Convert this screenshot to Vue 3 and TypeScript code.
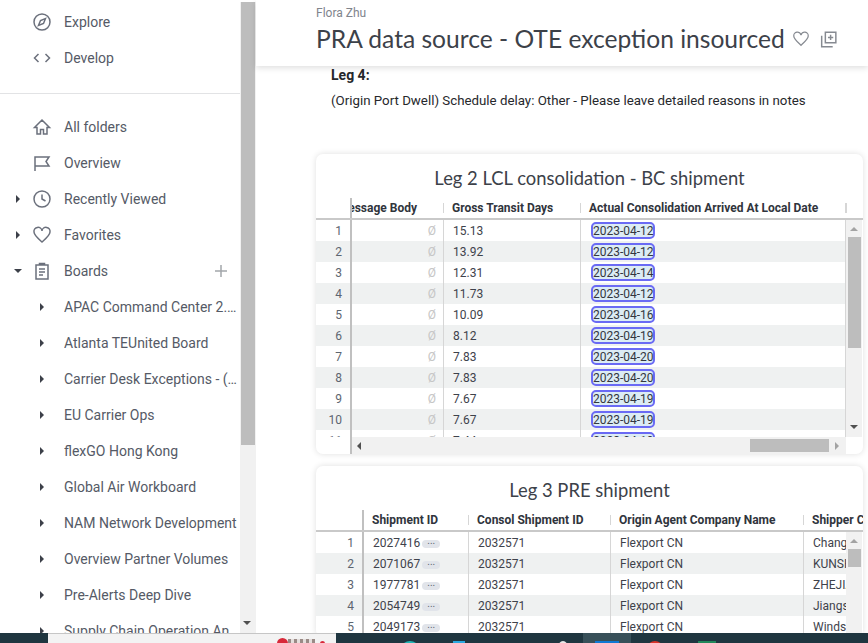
<template>
  <div class="screen">
    <div class="window">
      <!-- Sidebar -->
      <aside class="sidebar">
        <nav class="nav">
          <a v-for="item in topLinks" :key="item.label" class="nav-row">
            <span class="slot"></span>
            <svg class="icon" viewBox="0 0 20 20"><path :d="icons[item.icon]" /></svg>
            <span class="nav-label">{{ item.label }}</span>
          </a>
          <hr class="divider" />
          <a v-for="item in mainLinks" :key="item.label" class="nav-row">
            <span class="slot">
              <i v-if="item.caret === 'right'" class="caret-right top"></i>
              <i v-if="item.caret === 'down'" class="caret-down"></i>
            </span>
            <svg class="icon" viewBox="0 0 20 20"><path :d="icons[item.icon]" /></svg>
            <span class="nav-label">{{ item.label }}</span>
            <svg v-if="item.label === 'Boards'" class="plus" viewBox="0 0 14 14"><path d="M7 1v12M1 7h12" /></svg>
          </a>
          <a v-for="board in boards" :key="board" class="nav-row">
            <span class="slot"></span>
            <span class="icon-slot"><i class="caret-right"></i></span>
            <span class="nav-label">{{ board }}</span>
          </a>
        </nav>
        <div class="side-scroll">
          <div class="side-thumb"></div>
          <i class="arrow-down side-arrow"></i>
        </div>
      </aside>

      <!-- Dashboard -->
      <main class="main">
        <header class="topbar">
          <div class="author">Flora Zhu</div>
          <div class="title-row">
            <h1>PRA data source - OTE exception insourced</h1>
            <svg class="title-icon heart" viewBox="0 0 20 20"><path :d="icons.heart" /></svg>
            <svg class="title-icon copy" viewBox="0 0 20 20">
              <path d="M7 3h10v10H7zM3.500 6.500V17h10.500M12 5.500v5M9.500 8h5" />
            </svg>
          </div>
        </header>

        <div class="content">
          <section class="note">
            <h3>Leg 4:</h3>
            <p>(Origin Port Dwell) Schedule delay: Other - Please leave detailed reasons in notes</p>
          </section>

          <article class="card">
            <h2>Leg 2 LCL consolidation - BC shipment</h2>
            <div class="head cols-bc">
              <div class="hcell hnum"></div>
              <div class="hcell hclip"><span>Message Body</span></div>
              <div class="hcell">Gross Transit Days</div>
              <div class="hcell">Actual Consolidation Arrived At Local Date</div>
              <div class="hcell hend"></div>
            </div>
            <div class="table-body bc-body">
              <div class="rows">
                <div v-for="(row, i) in legTwo" :key="i" class="row cols-bc-rows">
                  <div class="cell num">{{ i + 1 }}</div>
                  <div class="cell empty">Ø</div>
                  <div class="cell">{{ row.days }}</div>
                  <div class="cell"><span class="date">{{ row.date }}</span></div>
                </div>
              </div>
              <div class="vbar">
                <i class="arrow-up"></i>
                <div class="vthumb bc-thumb"></div>
                <i class="arrow-down bc-down"></i>
              </div>
            </div>
            <div class="hbar">
              <div class="hbar-gutter"></div>
              <div class="hbar-track">
                <i class="arrow-left"></i>
                <div class="hthumb"></div>
                <i class="arrow-right"></i>
              </div>
            </div>
          </article>

          <article class="card card-pre">
            <h2>Leg 3 PRE shipment</h2>
            <div class="head cols-pre">
              <div class="hcell hnum"></div>
              <div class="hcell">Shipment ID</div>
              <div class="hcell">Consol Shipment ID</div>
              <div class="hcell">Origin Agent Company Name</div>
              <div class="hcell hlast">Shipper Company</div>
            </div>
            <div class="table-body">
              <div class="rows">
                <div v-for="(row, i) in legThree" :key="row.id" class="row cols-pre-rows">
                  <div class="cell num">{{ i + 1 }}</div>
                  <div class="cell">{{ row.id }}<span class="more">...</span></div>
                  <div class="cell">2032571</div>
                  <div class="cell">Flexport CN</div>
                  <div class="cell clip">{{ row.shipper }}</div>
                </div>
              </div>
              <div class="vbar">
                <i class="arrow-up"></i>
                <div class="vthumb pre-thumb"></div>
              </div>
            </div>
          </article>
        </div>
      </main>
    </div>

    <!-- Windows taskbar, only its top edge is on screen -->
    <footer class="taskbar">
      <div class="start"></div>
      <div class="search">
        <i class="search-red"></i>
        <i class="search-grey"></i>
        <i class="search-red small"></i>
      </div>
      <i class="app teal"></i>
      <i class="app blue"></i>
      <i class="app white"></i>
      <div class="app-active"><i class="app-win"></i></div>
      <i class="app red"></i>
      <i class="app green"></i>
    </footer>
  </div>
</template>

<script setup lang="ts">
interface NavItem {
  label: string;
  icon: string;
  caret?: 'right' | 'down';
}

const icons: Record<string, string> = {
  explore: 'M10 2a8 8 0 1 0 0 16 8 8 0 0 0 0-16zM13.500 6.500l-2 5-5 2 2-5z',
  develop: 'M6.500 6l-4 4 4 4M13.500 6l4 4-4 4',
  home: 'M10 3L2.500 10.500H5V17h3.500v-4.500h3V17H15v-6.500h2.500z',
  flag: 'M3 18V4h14l-3 4.500 3 4.500H3',
  clock: 'M10 2a8 8 0 1 0 0 16 8 8 0 0 0 0-16zM10 5.500V10l3.500 2',
  heart: 'M10 17C5 12.500 2 10 2 7a4 4 0 0 1 8-1.200A4 4 0 0 1 18 7c0 3-3 5.500-8 10z',
  boards: 'M4 4h12v14H4zM7.500 4V2.500h5V4M7 8h6M7 11h6M7 14h4',
};

const topLinks: NavItem[] = [
  { label: 'Explore', icon: 'explore' },
  { label: 'Develop', icon: 'develop' },
];

const mainLinks: NavItem[] = [
  { label: 'All folders', icon: 'home' },
  { label: 'Overview', icon: 'flag' },
  { label: 'Recently Viewed', icon: 'clock', caret: 'right' },
  { label: 'Favorites', icon: 'heart', caret: 'right' },
  { label: 'Boards', icon: 'boards', caret: 'down' },
];

const boards = [
  'APAC Command Center 2.0 Board',
  'Atlanta TEUnited Board',
  'Carrier Desk Exceptions - (Copy)',
  'EU Carrier Ops',
  'flexGO Hong Kong',
  'Global Air Workboard',
  'NAM Network Development',
  'Overview Partner Volumes',
  'Pre-Alerts Deep Dive',
  'Supply Chain Operation An',
];

const legTwo = [
  { days: '15.13', date: '2023-04-12' },
  { days: '13.92', date: '2023-04-12' },
  { days: '12.31', date: '2023-04-14' },
  { days: '11.73', date: '2023-04-12' },
  { days: '10.09', date: '2023-04-16' },
  { days: '8.12', date: '2023-04-19' },
  { days: '7.83', date: '2023-04-20' },
  { days: '7.83', date: '2023-04-20' },
  { days: '7.67', date: '2023-04-19' },
  { days: '7.67', date: '2023-04-19' },
  { days: '7.44', date: '2023-04-19' },
];

const legThree = [
  { id: '2027416', shipper: 'Changzhou' },
  { id: '2071067', shipper: 'KUNSHAN' },
  { id: '1977781', shipper: 'ZHEJIANG' },
  { id: '2054749', shipper: 'Jiangsu' },
  { id: '2049173', shipper: 'Windsor' },
];
</script>

<style scoped>
.screen {
  width: 868px;
  height: 643px;
  display: flex;
  flex-direction: column;
  overflow: hidden;
  background: #fff;
  font-family: Roboto, 'Liberation Sans', sans-serif;
}

.window {
  flex: 1;
  min-height: 0;
  display: flex;
}

/* sidebar */
.sidebar {
  width: 256px;
  flex: none;
  display: flex;
  overflow: hidden;
}

.nav {
  width: 240px;
  flex: none;
  padding-top: 4px;
}

.nav-row {
  height: 36px;
  display: flex;
  align-items: center;
  padding-left: 12px;
  color: #555a66;
  font-size: 14px;
}

.slot {
  width: 20px;
  flex: none;
  display: flex;
  align-items: center;
}

.icon {
  width: 20px;
  height: 20px;
  flex: none;
  fill: none;
  stroke: #6b707c;
  stroke-width: 1.500;
}

.icon-slot {
  width: 20px;
  flex: none;
  display: flex;
  justify-content: center;
}

.nav-label {
  width: 173px;
  margin-left: 12px;
  white-space: nowrap;
  overflow: hidden;
  text-overflow: ellipsis;
}

.plus {
  width: 14px;
  height: 14px;
  flex: none;
  margin-left: -23px;
  fill: none;
  stroke: #a3a6ab;
  stroke-width: 1.500;
}

.divider {
  height: 1px;
  margin: 17px 0 15px;
  border: 0;
  background: #e2e3e5;
}

.caret-right {
  display: block;
  width: 0;
  height: 0;
  border-top: 4px solid transparent;
  border-bottom: 4px solid transparent;
  border-left: 4px solid #3c4049;
}

.caret-right.top {
  margin-left: 4px;
}

.caret-down {
  display: block;
  width: 0;
  height: 0;
  margin-left: 2px;
  border-left: 4px solid transparent;
  border-right: 4px solid transparent;
  border-top: 4px solid #3c4049;
}

.side-scroll {
  width: 16px;
  flex: none;
  display: flex;
  flex-direction: column;
  background: linear-gradient(#fff 0 2px, #f1f1f1 2px);
}

.side-thumb {
  width: 14px;
  height: 443px;
  margin: 2px 0 0 1px;
  background: #bdbdbd;
}

.arrow-down,
.arrow-up {
  display: block;
  width: 0;
  height: 0;
  border-left: 4px solid transparent;
  border-right: 4px solid transparent;
}

.arrow-down {
  border-top: 4px solid #505050;
}

.arrow-up {
  border-bottom: 4px solid #a3a3a3;
}

.side-arrow {
  margin: 176px 0 0 3px;
}

/* main column */
.main {
  flex: 1;
  min-width: 0;
  display: flex;
  flex-direction: column;
}

.topbar {
  position: relative;
  z-index: 2;
  height: 66px;
  box-sizing: border-box;
  flex: none;
  padding: 6px 0 0 60px;
  background: #fff;
  box-shadow: 0 2px 6px rgba(0, 0, 0, 0.13);
}

.author {
  height: 14px;
  font-size: 12px;
  line-height: 14px;
  color: #80848c;
}

.title-row {
  display: flex;
  align-items: center;
  height: 38px;
}

h1 {
  margin: 0 0 2px;
  font-family: Lato, sans-serif;
  font-size: 24.6px;
  font-weight: 400;
  color: #3c4149;
  white-space: nowrap;
}

.title-icon {
  flex: none;
  fill: none;
  stroke: #868a91;
  stroke-width: 1.400;
}

.heart {
  width: 18px;
  height: 18px;
  margin-left: 7px;
}

.copy {
  width: 21px;
  height: 21px;
  margin-left: 8px;
}

.content {
  flex: 1;
  min-height: 0;
  overflow: hidden;
  padding: 0 5px 0 60px;
}

.note {
  padding: 1px 0 45px 15px;
  color: #26282c;
}

h3 {
  margin: 0;
  font-size: 14px;
  line-height: 16px;
  font-weight: 700;
}

.note p {
  margin: 10px 0 0;
  font-size: 13.3px;
  line-height: 16px;
}

.card {
  width: 547px;
  border-radius: 7px;
  background: #fff;
  overflow: hidden;
  box-shadow: 0 0 6px rgba(0, 0, 0, 0.13);
}

.card-pre {
  margin-top: 12px;
}

h2 {
  height: 36px;
  margin: 0;
  padding-top: 12px;
  box-sizing: border-box;
  font-family: Lato, sans-serif;
  font-size: 18.4px;
  line-height: 24px;
  font-weight: 400;
  text-align: center;
  color: #3c4149;
}

.head {
  display: grid;
  height: 30px;
  box-sizing: border-box;
  padding-top: 7px;
  border-bottom: 2px solid #c9c9c9;
  font-size: 12px;
  font-weight: 700;
  color: #30343c;
}

.cols-bc {
  grid-template-columns: 36px 92px 137px 265px 17px;
}

.cols-pre {
  grid-template-columns: 48px 105px 142px 193px 59px;
}

.cols-bc-rows {
  grid-template-columns: 36px 92px 137px 265px;
}

.cols-pre-rows {
  grid-template-columns: 48px 105px 142px 193px 42px;
}

.hcell {
  display: flex;
  align-items: center;
  padding-left: 8px;
  white-space: nowrap;
  overflow: hidden;
  position: relative;
}

.hcell + .hcell:not(.hnum)::after {
  content: '';
  position: absolute;
  right: 0;
  top: 6px;
  height: 10px;
  border-right: 1px solid #d6d6d6;
}

.hnum {
  margin-top: 1px;
  border-right: 2px solid #c0c0c0;
}

.hclip {
  padding-left: 0;
  justify-content: flex-end;
  padding-right: 27px;
}

.hend {
  padding: 0;
}

.hend::after {
  left: 0;
  right: auto !important;
}

.hlast::after {
  display: none;
}

.table-body {
  display: flex;
}

.bc-body {
  height: 217px;
}

.rows {
  width: 530px;
  flex: none;
  overflow: hidden;
}

.row {
  display: grid;
  height: 21px;
  font-size: 12px;
  line-height: 23px;
  color: #3e424b;
}

.row:nth-child(even) {
  background: #eff1f1;
}

.cell {
  padding-left: 9px;
  border-right: 1px solid #d6d6d6;
  white-space: nowrap;
  overflow: hidden;
}

.cell.num {
  padding: 0 8px 0 0;
  border-right: 2px solid #c0c0c0;
  text-align: right;
  color: #5d6570;
}

.cell.empty {
  padding: 0 7px 0 0;
  text-align: right;
  color: #c6c6c6;
}

.cell.clip {
  border-right: 0;
}

.date {
  display: inline-block;
  width: 64px;
  height: 17px;
  box-sizing: border-box;
  margin-left: 1px;
  border: 2px solid #6a6af4;
  border-radius: 5px;
  background: #dcecf4;
  line-height: 14px;
  text-align: center;
  color: #33373f;
  vertical-align: top;
  margin-top: 2px;
}

.more {
  display: inline-block;
  width: 18px;
  height: 8px;
  margin-left: 2px;
  border-radius: 5px;
  background: #e1e4ea;
  font-size: 10px;
  line-height: 2px;
  text-align: center;
  vertical-align: middle;
  color: #5d6570;
}

.vbar {
  width: 16px;
  flex: none;
  display: flex;
  flex-direction: column;
  padding-top: 7px;
  box-sizing: border-box;
  background: #f1f1f1;
}

.vbar .arrow-up,
.vbar .arrow-down {
  margin-left: 4px;
}

.vthumb {
  width: 13px;
  margin: 6px 0 0 2px;
  background: #bdbdbd;
}

.bc-thumb {
  height: 111px;
}

.pre-thumb {
  height: 18px;
}

.bc-down {
  margin-top: 77px;
}

.hbar {
  display: flex;
  height: 17px;
}

.hbar-gutter {
  width: 36px;
  box-sizing: border-box;
  border-right: 2px solid #c0c0c0;
}

.hbar-track {
  width: 494px;
  display: flex;
  align-items: center;
  background: #f1f1f1;
}

.arrow-left,
.arrow-right {
  display: block;
  width: 0;
  height: 0;
  border-top: 4px solid transparent;
  border-bottom: 4px solid transparent;
}

.arrow-left {
  margin-left: 5px;
  border-right: 4px solid #505050;
}

.arrow-right {
  margin-left: 6px;
  border-left: 4px solid #a3a3a3;
}

.hthumb {
  width: 79px;
  height: 13px;
  margin-left: 389px;
  background: #bdbdbd;
}

/* taskbar */
.taskbar {
  height: 10px;
  flex: none;
  display: flex;
  background: #1f3640;
  overflow: hidden;
}

.start {
  width: 48px;
  flex: none;
}

.search {
  width: 288px;
  flex: none;
  display: flex;
  align-items: flex-start;
  box-sizing: border-box;
  padding-left: 229px;
  border-top: 1px solid #c6c6c6;
  background: #f3f3f3;
}

.search-red {
  width: 11px;
  height: 9px;
  margin-top: 4px;
  border-radius: 6px 6px 0 0;
  background: #d8293a;
}

.search-red.small {
  width: 5px;
  margin-top: 7px;
}

.search-grey {
  width: 27px;
  height: 9px;
  margin: 5px 5px 0 0;
  background: repeating-linear-gradient(90deg, #9a8a86 0 3px, #e5dfdd 3px 6px);
}

.app {
  display: block;
  flex: none;
  height: 20px;
  margin-top: 8px;
}

.teal {
  width: 20px;
  margin-left: 64px;
  border-radius: 50%;
  background: #1fb5b5;
}

.blue {
  width: 12px;
  margin-left: 33px;
  background: #29a8e0;
}

.white {
  width: 12px;
  margin-left: 92px;
  border-radius: 50%;
  background: #e8e8e8;
}

.app-active {
  width: 48px;
  flex: none;
  margin-left: 14px;
  padding: 8px 0 0 12px;
  box-sizing: border-box;
  background: #385059;
}

.app-win {
  display: block;
  width: 24px;
  height: 20px;
  background: #0f78d4;
}

.red {
  width: 18px;
  margin-left: 15px;
  border-radius: 50%;
  background: #d9342b;
}

.green {
  width: 18px;
  margin-left: 34px;
  background: #21875a;
}
</style>
